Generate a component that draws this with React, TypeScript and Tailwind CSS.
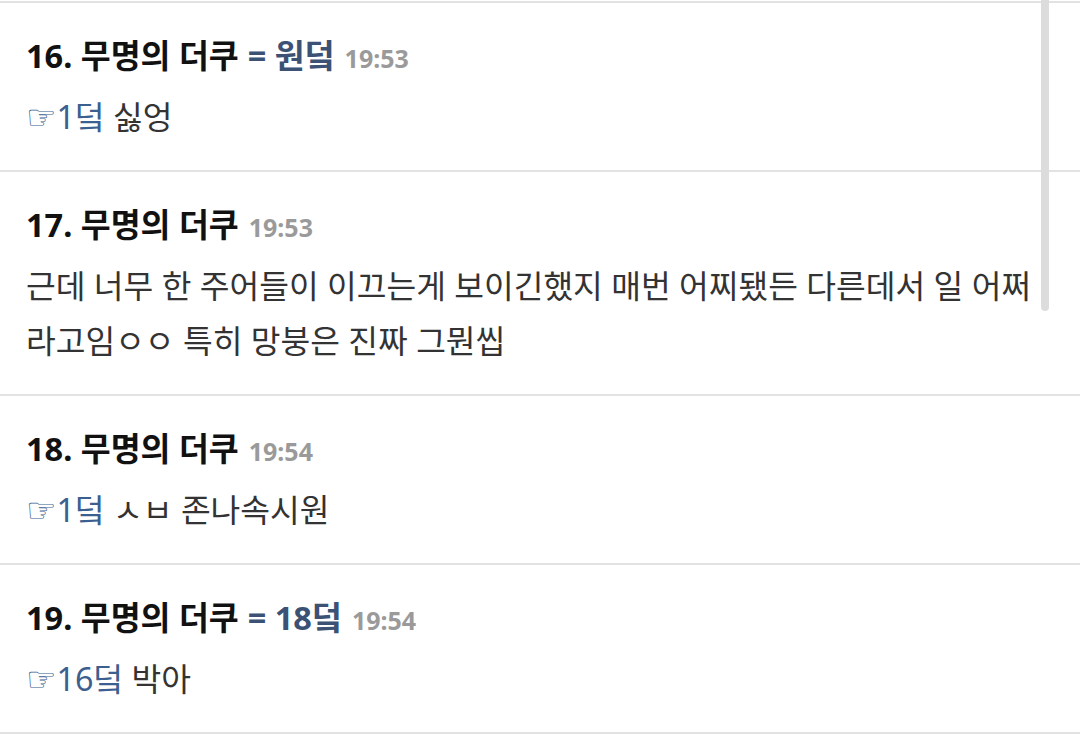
import React from "react";

type Post = {
  no: number;
  alias?: string;
  time: string;
  lines: React.ReactNode;
};

const FONT = {
  fontFamily: "'Noto Sans', 'Noto Sans CJK KR', sans-serif",
};

function Ref({ to }: { to: string }) {
  return (
    <span className="text-[#3b5f8f]">
      <span
        style={{ fontFamily: "'DejaVu Sans', sans-serif" }}
        className="inline-block text-[34px] leading-[20px]"
      >
        ☞
      </span>
      {to}
    </span>
  );
}

const posts: Post[] = [
  {
    no: 16,
    alias: "원덬",
    time: "19:53",
    lines: (
      <>
        <Ref to="1덬" /> 싫엉
      </>
    ),
  },
  {
    no: 17,
    time: "19:53",
    lines: (
      <>
        근데 너무 한 주어들이 이끄는게 보이긴했지 매번 어찌됐든 다른데서 일 어쩌
        <br />
        라고임ㅇㅇ 특히 망붕은 진짜 그뭔씹
      </>
    ),
  },
  {
    no: 18,
    time: "19:54",
    lines: (
      <>
        <Ref to="1덬" /> ㅅㅂ 존나속시원
      </>
    ),
  },
  {
    no: 19,
    alias: "18덬",
    time: "19:54",
    lines: (
      <>
        <Ref to="16덬" /> 박아
      </>
    ),
  },
];

function Comment({ post }: { post: Post }) {
  return (
    <div className="border-b-2 border-[#e2e2e2] pl-[26px] pr-[30px] pt-[35px] pb-[26px]">
      <div className="flex items-baseline h-[36px] leading-[36px] whitespace-nowrap">
        <span className="text-[32.5px] font-bold text-[#111]">
          {post.no}. 무명의 더쿠
        </span>
        {post.alias && (
          <span className="ml-[9px] text-[32.5px] font-bold text-[#3c5275]">
            = {post.alias}
          </span>
        )}
        <span className="ml-[10px] text-[25px] font-bold text-[#9a9a9a]">
          {post.time}
        </span>
      </div>
      <div className="mt-[15px] text-[32.3px] leading-[55px] text-[#333] whitespace-nowrap">
        {post.lines}
      </div>
    </div>
  );
}

export default function App() {
  return (
    <div
      className="relative w-[1080px] h-[734px] overflow-hidden bg-white pt-px"
      style={FONT}
    >
      <div className="border-t-2 border-[#e2e2e2]">
        {posts.map((p) => (
          <Comment key={p.no} post={p} />
        ))}
      </div>
      {/* overlay scrollbar */}
      <div className="absolute left-[1041px] top-0 w-[8px] h-[311px] rounded-b-full bg-[#dcdcdc]" />
    </div>
  );
}
